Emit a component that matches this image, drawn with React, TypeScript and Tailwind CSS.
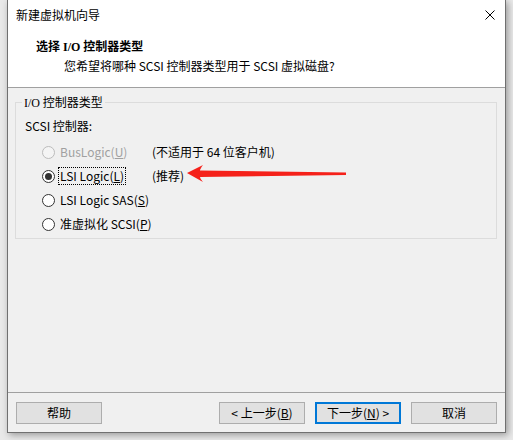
const ui = "font-['Microsoft_YaHei','Noto_Sans_CJK_SC',sans-serif]";

function Radio({ checked, disabled }: { checked?: boolean; disabled?: boolean }) {
  return (
    <span
      className={
        "w-[13px] h-[13px] rounded-full border flex items-center justify-center shrink-0 " +
        (disabled ? "border-[#bcbcbc] bg-[#f4f4f4]" : "border-[#333333] bg-white")
      }
    >
      {checked && <span className="w-[7px] h-[7px] rounded-full bg-[#333333]" />}
    </span>
  );
}

function Btn({ children, primary }: { children: React.ReactNode; primary?: boolean }) {
  return (
    <button
      className={
        "w-[86px] h-[22px] bg-[#e1e1e1] text-[12px] leading-none text-black flex items-center justify-center whitespace-nowrap " +
        (primary ? "border-2 border-[#0078d7]" : "border border-[#adadad]")
      }
    >
      {children}
    </button>
  );
}

export default function App() {
  const rows = [
    { label: "BusLogic(", key: "U", note: "(不适用于 64 位客户机)", disabled: true },
    { label: "LSI Logic(", key: "L", note: "(推荐)", checked: true, focus: true },
    { label: "LSI Logic SAS(", key: "S" },
    { label: "准虚拟化 SCSI(", key: "P" },
  ];

  return (
    <div className={"relative w-[513px] h-[440px] bg-[#e9e9e9] overflow-hidden text-[12px] text-black " + ui}>
      <div className="ml-[7px] w-[499px] h-[433px] border-x border-b border-[#707070] bg-[#f0f0f0] flex flex-col shadow-[2px_2px_7px_rgba(0,0,0,0.35)]">
        <div className="h-[88px] bg-white border-b border-[#a0a0a0]">
          <div className="h-[30px] flex items-center justify-between pl-[8px] pr-[10px]">
            <span className="leading-[16px]">新建虚拟机向导</span>
            <svg width="10" height="10" viewBox="0 0 10 10">
              <path d="M0.5 0.5 L9.5 9.5 M9.5 0.5 L0.5 9.5" stroke="#000" strokeWidth="1" />
            </svg>
          </div>
          <div className="pt-[9px] pl-[28px] leading-[16px] font-bold font-['Liberation_Serif','Noto_Sans_CJK_SC',serif]">
            选择 I/O 控制器类型
          </div>
          <div className="mt-[3px] pl-[56px] leading-[16px]">您希望将哪种 SCSI 控制器类型用于 SCSI 虚拟磁盘?</div>
        </div>

        <div className="flex-1">
          <div className="relative mt-[14px] ml-[7px] w-[482px] h-[137px] border border-[#dcdcdc]">
            <span className="absolute -top-[9px] left-[6px] px-[2px] bg-[#f0f0f0] leading-[16px]">
              <span className="font-['Liberation_Serif','Noto_Sans_CJK_SC',serif]">I/O</span> 控制器类型
            </span>
            <div className="pt-[15px] pl-[9px] leading-[16px]">SCSI 控制器:</div>
            <div className="mt-[6px] pl-[26px] flex flex-col">
              {rows.map((r) => (
                <div key={r.key} className="h-[24px] flex items-center whitespace-nowrap">
                  <div className="w-[110px] shrink-0 flex items-center gap-[3px]">
                    <Radio checked={r.checked} disabled={r.disabled} />
                    <span
                      className={
                        "leading-[16px] px-[1px] border " +
                        (r.focus ? "border-dotted border-black" : "border-transparent") +
                        (r.disabled ? " text-[#a0a0a0]" : "")
                      }
                    >
                      {r.label}
                      <span className="underline">{r.key}</span>)
                    </span>
                  </div>
                  {r.note && <span className="leading-[16px]">{r.note}</span>}
                </div>
              ))}
            </div>
          </div>
        </div>

        <div className="h-[40px] border-t border-[#a0a0a0] pt-[9px] px-[8px] flex justify-between">
          <Btn>帮助</Btn>
          <div className="flex gap-[10px]">
            <Btn>
              &lt; 上一步(<span className="underline">B</span>)
            </Btn>
            <Btn primary>
              下一步(<span className="underline">N</span>) &gt;
            </Btn>
            <Btn>取消</Btn>
          </div>
        </div>
      </div>

      <svg className="absolute left-[180px] top-[160px]" width="170" height="28" viewBox="0 0 170 28">
        <path d="M7 13 L23 5 Q20 9 20 10.5 L166 12.5 L166 15 L20 17 Q20 19 23 22 Z" fill="#f5211a" />
      </svg>
    </div>
  );
}
